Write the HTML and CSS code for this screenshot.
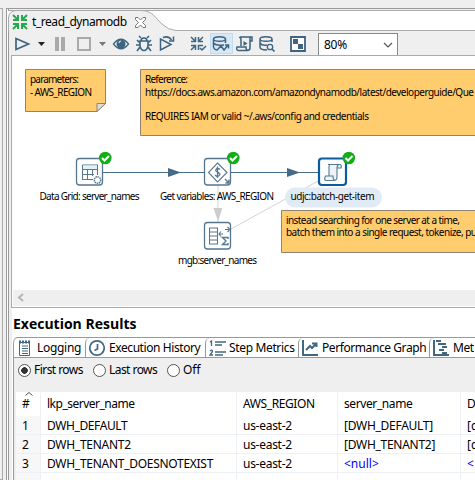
FILE: index.html
```html
<!DOCTYPE html>
<html lang="en">
<head>
<meta charset="utf-8">
<title>t_read_dynamodb</title>
<link rel="stylesheet" href="styles.css">
</head>
<body>
<div class="app">
<aside class="sash"></aside>
<main class="editor">
<header class="tabbar">
<div class="tab">
<svg class="tabshape" width="168" height="21" viewBox="0 0 168 21"><path d="M0 21V8Q1 1 8 .5H133C145 .5 148 9 154 14Q160 20 168 20V21Z" fill="#efefef"/><path d="M.5 21V8Q1 1 8 .5H133C145 .5 148 9 154 14Q160 20 168 20.500" fill="none" stroke="#aaa"/></svg>
<svg class="tabicon" width="16" height="16" viewBox="0 0 16 16"><path d="M1 1L5 5M15 1L11 5M1 15L5 11M15 15L11 11M1 6H6V1M10 1V6H15M1 10H6V15M10 15V10H15" fill="none" stroke="#27a94d" stroke-width="2"/></svg>
<span class="tabname">t_read_dynamodb</span>
<svg class="close" width="11" height="11" viewBox="0 0 11 11"><path d="M.5.5H3L5.500 3 8 .5H10.500V2.500L7.500 5.500 10.500 8.500V10.500H8L5.500 8 3 10.500H.5V8.500L3.500 5.500.5 2.500Z" fill="#fff" stroke="#777"/></svg>
</div>
</header>
<nav class="toolbar">
<svg width="276" height="24" viewBox="12 31 276 24" fill="none" stroke="#3d6480" stroke-width="1.700">
<path d="M16 38.500V49.500L28.500 44Z"/>
<path d="M38 42H45L41.500 46Z" fill="#222" stroke="none"/>
<path d="M55 37H59V51H55ZM61 37H65V51H61Z" fill="#aaa" stroke="none"/>
<path d="M78 38H90V50H78Z" stroke="#aaa" stroke-width="2"/>
<path d="M99 42H106L102.500 46Z" fill="#777" stroke="none"/>
<path d="M113.500 44Q121 34.500 128.500 44Q121 53.500 113.500 44Z" stroke-width="1.300"/><circle cx="121" cy="44" r="4.500" fill="#3d6480" stroke="none"/><path d="M119 43Q119 41 121 41" stroke="#fff" stroke-width="1"/>
<path d="M140 41H148V46Q147 50.500 144 50.500T140 46ZM141 41Q141 38 144 38T147 41M141 38L139 36M147 38L149 36M140 43L137 40M148 43L151 40M140 45H136M148 45H152M140 47L137 51M148 47L151 51" stroke-width="1.600"/>
<path d="M160.500 39V50L171 44.500ZM163 37.500Q169 35.500 171.500 40M173.500 36.500V41H169" stroke-width="1.500"/>
<path d="M191 37L195 41M203 37L199 41M191 50L195 46M191 41.500H195.500V37M198.500 37V41.500H203M191 45.500H195.500V50M203 45.500H198.500V50M200 48L202 50L206 46" stroke-width="1.500"/>
<path d="M210.500 33.500H232.500V53.500H210.500Z" fill="#d8e8f4" stroke="#bcdcf4" stroke-width="1"/>
<path d="M213.500 39V47Q214 50 218 50M213.500 43Q216 46 224 45M213.500 39C214 36 225 36 225.500 39C225 42 214 42 213.500 39M225.500 39V43M217 50L221 46L224 50L228 45M225 45H228.500V48.500" stroke-width="1.500"/>
<path d="M240 37H250V48Q250 50.500 247 50.500H238Q236 50 237 47H246Q246 51 248 50M241 46V40Q241 37 239 37.500M250 41H252V37H240" stroke-width="1.500"/><path d="M243.500 41V46L247.500 43.500Z" fill="#3d6480" stroke="none"/>
<path d="M260 39V47Q260 50 267 50M260 43Q262 46 267 45M260 39C260 36 272 36 272 39C272 42 260 42 260 39M272 39V42" stroke-width="1.500"/><circle cx="270" cy="47" r="2.700" stroke-width="1.300"/><path d="M272 49L274.500 51.500"/>
</svg>
<svg width="20" height="24" viewBox="288 31 20 24"><path d="M291 37H305V51H291Z" fill="#fff" stroke="#3d6480" stroke-width="1.800"/><path d="M293 39H298V44H293ZM298 44H303V49H298Z" fill="#3d6480"/></svg>
<div class="zoom"><span>80%</span><svg width="10" height="6" viewBox="0 0 10 6"><path d="M1 1L5 5L9 1" fill="none" stroke="#555" stroke-width="1.200"/></svg></div>
</nav>
<section class="canvas">
<svg width="463" height="235" viewBox="12 56 463 235">
<g fill="#ffcc6e" stroke="#8d8474"><path d="M25.500 69.500H105.500V103.500L97 111.500H25.500Z"/><path d="M105.500 103.500H97V111.500Z" fill="#ddd"/><path d="M140.500 69.500H480V135.500H140.500Z"/></g>
<g stroke="#456b88"><path d="M103 172.500H205M230 172.500H320"/><path d="M168 168V177L181 172.500ZM287 168V177L300 172.500Z" fill="#456b88" stroke="none"/></g>
<path d="M218 185V222M231 229L320 180" stroke="#d3d3d3" fill="none"/><path d="M213.500 208H222.500L218 221Z" fill="#ccc"/>
<g fill="#fff" stroke="#54768f" stroke-width="1.300"><rect x="76.500" y="158.500" width="26" height="26.500" rx="3"/><rect x="204.500" y="158.500" width="26" height="26.500" rx="3"/><rect x="204.500" y="222.500" width="26" height="26.500" rx="3"/><rect x="319" y="158.500" width="27" height="26.500" rx="3" stroke="#0b5b9f" stroke-width="2.200"/></g>
<g fill="none" stroke="#58788e" stroke-width="1.100"><path d="M82.500 165H97.500V175M82.500 165V179.500H93M82.500 169.500H97.500M82.500 174.500H94M87.500 169V179.500M92.500 169V176"/><path d="M83 165.500H97V169H83Z" fill="#e0f2f8" stroke="none"/><circle cx="97.500" cy="180" r="3.200" fill="#fff" stroke-dasharray="1.500 .6" stroke-width="1.500"/>
<path d="M217.500 163L227 172.500L217.500 182L208.500 172.500Z"/><path d="M220 169.500Q217.500 167.500 216 169.500C214.500 172 220 172 220 174.500Q218 178 215 175M217.500 166.500V178" stroke-width="1.300"/><path d="M225 179L229 183M229 179.500V183H225.500" stroke-width="1.400"/>
<path d="M209.500 228H217.500V244H209.500ZM209.500 232H217.500M209.500 236H217.500M209.500 240H217.500M219 234H223M221 231.500L219 234L221 236.500M225 229.500H229M227.500 227L230 229.500L227.500 232"/><path d="M228 239V237.500H222.500L226 241L222.500 244.500H228V243" stroke-width="1.400"/>
<path d="M328 164.500H340Q342 165 341 168H337V177Q337 180.500 334 180.500H326Q323.500 180 325.500 176H329V167Q330 164 328 164.500M337 168Q337 165 339 164.500M329 176H333Q333 180 335 180.500" fill="#edf4f8"/></g>
<rect x="285" y="187.500" width="97" height="20" rx="10" fill="#e1ebf5"/>
<path d="M281.500 210.500H480V252.500H281.500Z" fill="#ffcc6e" stroke="#8d8474"/>
<g fill="#12ad19"><circle cx="105.300" cy="158" r="6.300"/><circle cx="233.300" cy="158" r="6.300"/><circle cx="348.800" cy="158" r="6.300"/></g>
<path d="M102 158L104.500 160.500L109 156M230 158L232.500 160.500L237 156M345.500 158L348 160.500L352.500 156" fill="none" stroke="#fff" stroke-width="2"/>
<g class="labels">
<text x="30" y="83" textLength="49">parameters:</text><text x="30" y="96" textLength="62">- AWS_REGION</text>
<text x="145" y="83" textLength="43">Reference:</text><text x="145" y="96" textLength="329">https://docs.aws.amazon.com/amazondynamodb/latest/developerguide/Que</text><text x="145" y="120" textLength="224">REQUIRES IAM or valid ~/.aws/config and credentials</text>
<text x="39.500" y="200" textLength="100">Data Grid: server_names</text><text x="160" y="200" textLength="114">Get variables: AWS_REGION</text><text x="290.500" y="200" textLength="84">udjc:batch-get-item</text><text x="178" y="264" textLength="79">mgb:server_names</text>
<text x="286" y="224" textLength="174">instead searching for one server at a time,</text><text x="286" y="236" textLength="191">batch them into a single request, tokenize, pu</text>
</g>
</svg>
<div class="scroll"><svg width="8" height="9" viewBox="0 0 8 9"><path d="M6 1L2 4.500L6 8" fill="none" stroke="#b5b5b5" stroke-width="2"/></svg></div>
</section>
<section class="results">
<h1><span>Execution Results</span></h1>
<div class="tabs">
<div class="rt t1"><svg width="16" height="18" viewBox="0 0 16 18" fill="none" stroke="#426783"><path d="M1.500 3.500H11.500V16.500H1.500ZM4 7H10M4 9.500H10M4 12H10M4 14.500H10"/><path d="M1 3H12" stroke-width="3" stroke-dasharray="2 1"/></svg><span>Logging</span></div>
<div class="rt t2"><svg width="16" height="18" viewBox="0 0 16 18" fill="none" stroke="#426783" stroke-width="1.700"><circle cx="8" cy="9" r="7.200"/><path d="M8.500 5V10L5.500 11.500"/></svg><span>Execution History</span></div>
<div class="rt t3"><svg width="17" height="18" viewBox="0 0 17 18" fill="none" stroke="#426783" stroke-width="1.300"><path d="M1 3L2.500 2V7M1 12Q3.500 10 3.500 12.500L1 16H4M6 3H17M6 6H13M6 13H17M6 16H14"/></svg><span>Step Metrics</span></div>
<div class="rt t4"><svg width="16" height="18" viewBox="0 0 16 18" fill="none" stroke="#426783" stroke-width="2"><path d="M1 1V16H16M4 11L8 7L10 9L14 5M10 4.500H14.500V8"/></svg><span>Performance Graph</span></div>
<div class="rt t5"><svg width="16" height="18" viewBox="0 0 16 18" fill="none" stroke="#426783" stroke-width="2"><path d="M1 1V16H16M3 2H8M5 5H13M9 8H14M6 11H11M9 14H14"/></svg><span>Met</span></div>
</div>
<div class="pane">
<div class="radios"><label><i class="on"></i><span>First rows</span></label><label><i></i><span>Last rows</span></label><label><i></i><span class="off">Off</span></label></div>
<div class="table">
<div class="row head"><b><svg class="sort" width="8" height="4" viewBox="0 0 8 4"><path d="M.5 3.500L4 .5L7.500 3.500" fill="none" stroke="#555"/></svg><span>#</span></b><b><span class="tight">lkp_server_name</span></b><b><span class="mid">AWS_REGION</span></b><b><span class="mid">server_name</span></b><b><span>D</span></b></div>
<div class="row"><b>1</b><b><span class="mid">DWH_DEFAULT</span></b><b><span>us-east-2</span></b><b><span>[DWH_DEFAULT]</span></b><b>[d</b></div>
<div class="row"><b>2</b><b><span>DWH_TENANT2</span></b><b><span>us-east-2</span></b><b><span>[DWH_TENANT2]</span></b><b>[d</b></div>
<div class="row"><b>3</b><b><span>DWH_TENANT_DOESNOTEXIST</span></b><b><span>us-east-2</span></b><b class="null">&lt;null&gt;</b><b class="null">&lt;</b></div>
<div class="row empty"><b></b><b></b><b></b><b></b><b></b></div>
</div>
</div>
</section>
</main>
</div>
</body>
</html>
```
FILE: styles.css
```css
*{box-sizing:border-box}
body{margin:0;width:475px;height:480px;overflow:hidden;background:#efefef;font:12px/16px "Noto Sans","Open Sans",sans-serif;color:#000}
svg{display:block;flex:none}
span{white-space:nowrap}
.app{display:flex;height:480px;padding-top:8px;overflow:hidden}
.sash{width:3px;border:1px solid #aaa;border-left:0;background:#efefef;flex:none}
.editor{width:469px;margin-left:3px;border:1px solid #999;border-right:0;border-bottom:0;padding:1px 0 0 1px;flex:none;background:linear-gradient(90deg,#fff 1px,#999 1px 2px,#efefef 2px)}
.tabbar{height:21px;border-top:1px solid #aaa;border-bottom:1px solid #aaa;background:#fff}
.tab{position:relative;display:flex;align-items:center;height:21px;padding:1px 0 0 4px}
.tabshape{position:absolute;left:0;top:-1px}
.tabicon,.tabname,.close{position:relative}
.tabname{margin-left:4px;width:103px;font-size:12px;letter-spacing:-.45px}
.toolbar{height:24px;background:#efefef;border-left:1px solid #999;display:flex;padding-left:3px}
.zoom{width:80px;height:22px;margin:2px 0 0 10px;border:1px solid #888;border-bottom:0;background:#fff;display:flex;align-items:center;justify-content:space-between;padding:0 4px 0 5px;letter-spacing:-.3px}
.canvas{height:253px;margin-left:3px;border:1px solid #aaa;border-right:0;overflow:hidden;background:#fff}
.labels{font:10px "Noto Sans","Open Sans",sans-serif}
.scroll{height:16px;margin:-1px 0 0 1px;padding:3px 0 0 4px;background:#efefef}
.results{height:172px;margin-left:4px;padding-left:1px;background:#fff}
h1{margin:0;height:29px;padding-top:6px;font:bold 14px/19px "Open Sans","Noto Sans",sans-serif}
.tabs{display:grid;grid-template-columns:72px 120px 93px 131px 46px;height:21px;border-top:1px solid #999;border-bottom:1px solid #999;border-top-left-radius:5px;overflow:hidden}
.rt{display:flex;align-items:center;gap:4px;padding-left:3px;border-left:1px solid #999;border-top-left-radius:5px;letter-spacing:-.42px;white-space:nowrap}
.rt span{padding-top:1px}
.t1{gap:3px;letter-spacing:-.3px;padding-left:4px}
.t3{gap:3px;letter-spacing:-.35px}
.pane{height:122px;border-left:1px solid #999;background:#efefef}
.radios{height:34px;display:grid;grid-template-columns:75px 74px 60px;padding:5px 0 0 4px}
.radios label{display:flex;height:14px;align-items:center;letter-spacing:-.55px}
.radios i{width:13px;height:13px;border:1px solid #555;border-radius:50%;background:#fff;margin-right:3px}
.radios .on{background:radial-gradient(circle,#333 0 3px,#fff 3.600px)}
.radios .off{letter-spacing:0}
.table{margin-left:2px;background:#fff}
.row{display:grid;grid-template-columns:25px 196px 101px 123px 14px;height:19px}
.row b{font-weight:400;border-right:1px solid #edf0f5;border-bottom:1px solid #edf0f5;padding:2px 0 0 6px;white-space:nowrap;min-width:0}
.row span{letter-spacing:-.28px}
.row .mid{letter-spacing:-.4px}
.row .tight{letter-spacing:-.5px}
.row b:first-child{background:#f7f7f7}
.row b:last-child{border-right:0}
.head{height:24px}
.head b,.head b:first-child{position:relative;padding-top:4px;border-bottom:0;background:#fff}
.sort{position:absolute;left:9px;top:0}
.row .null{color:#00f}
```
